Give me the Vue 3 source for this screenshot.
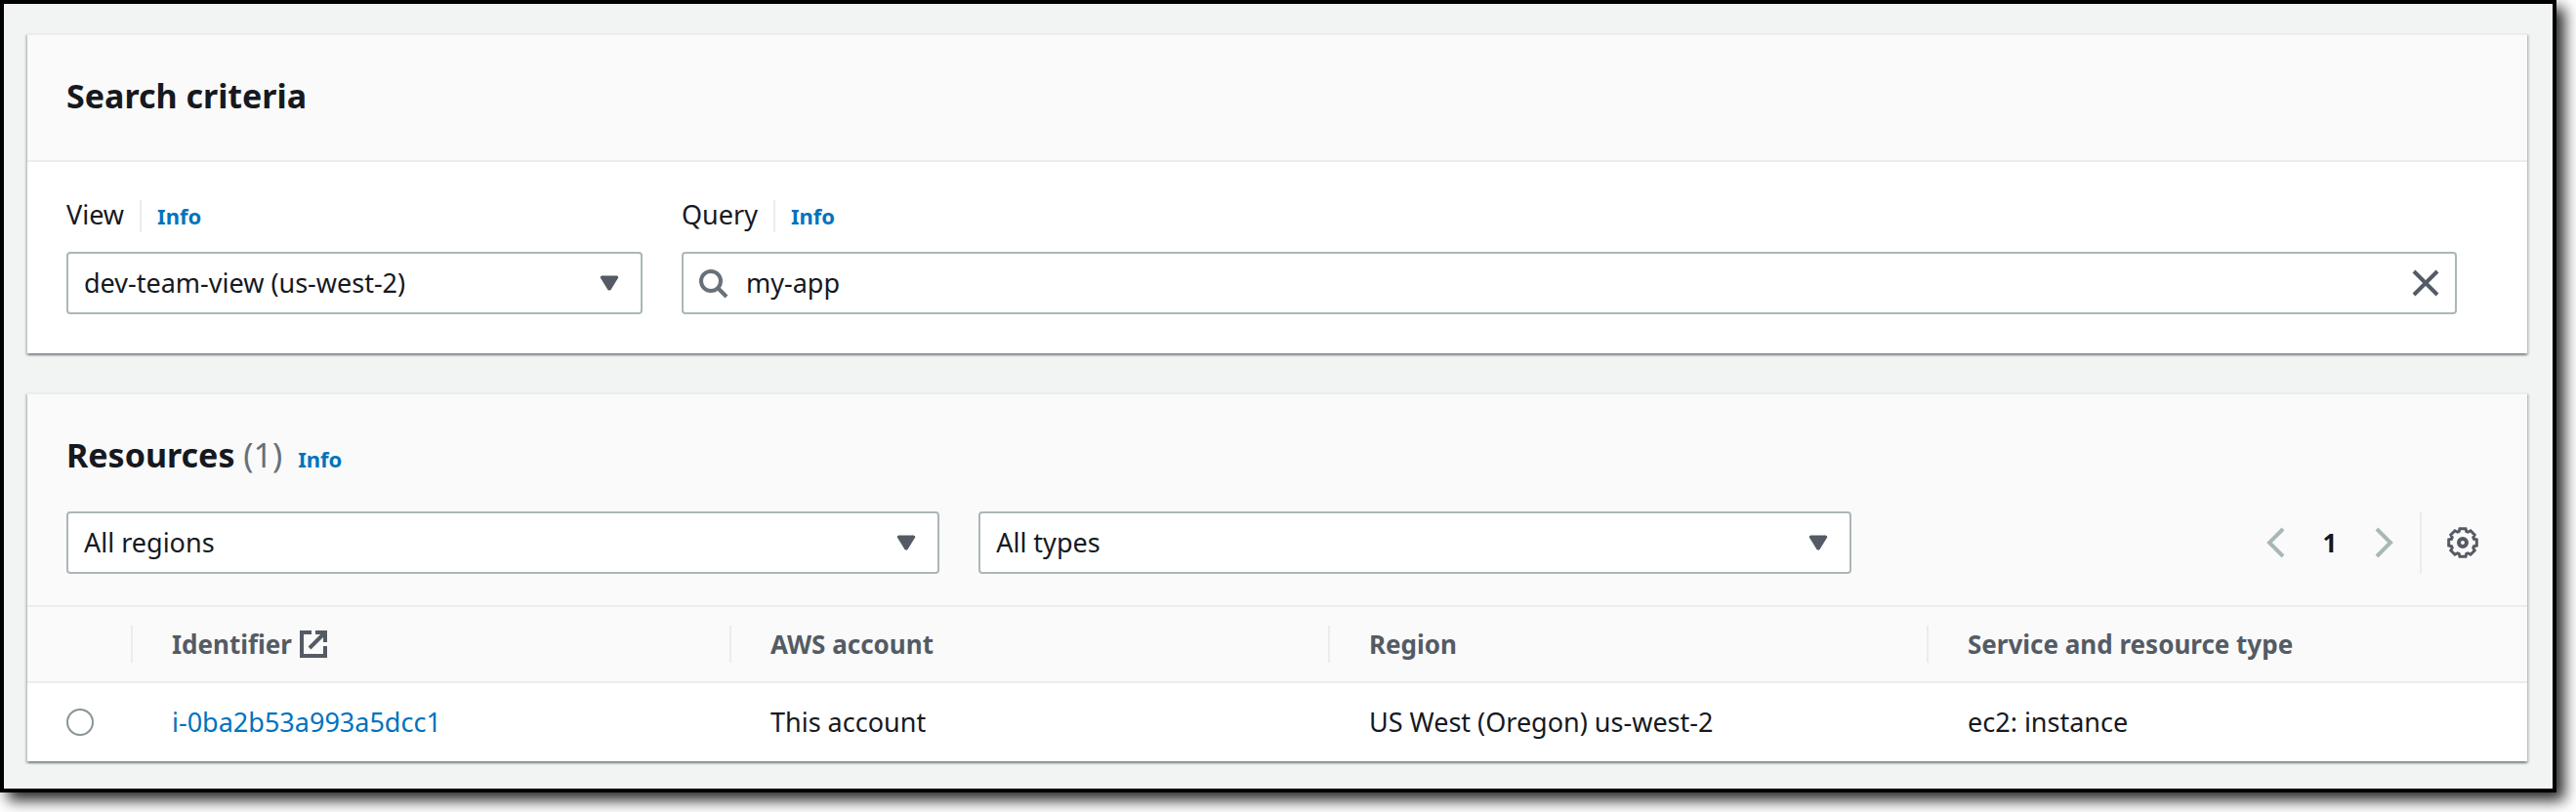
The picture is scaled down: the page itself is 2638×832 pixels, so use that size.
<script setup>
import { ref } from 'vue'

const view = ref('dev-team-view (us-west-2)')
const query = ref('my-app')
const region = ref('All regions')
const type = ref('All types')
const selected = ref(null)

const resources = [
  {
    id: 'i-0ba2b53a993a5dcc1',
    account: 'This account',
    region: 'US West (Oregon) us-west-2',
    type: 'ec2: instance',
  },
]
</script>

<template>
  <main class="window">
    <section class="card">
      <header class="card-header">
        <h2>Search criteria</h2>
      </header>
      <form class="criteria" @submit.prevent>
        <div class="field view-field">
          <div class="label-row">
            <label for="view">View</label>
            <a class="info divided" href="#view-info">Info</a>
          </div>
          <div class="select">
            <select id="view" v-model="view">
              <option>dev-team-view (us-west-2)</option>
            </select>
            <svg class="arrow" viewBox="0 0 20 16" aria-hidden="true">
              <path d="M2 1h16l1 1-8 13h-2L1 2z" />
            </svg>
          </div>
        </div>
        <div class="field query-field">
          <div class="label-row">
            <label for="query">Query</label>
            <a class="info divided" href="#query-info">Info</a>
          </div>
          <div class="search">
            <svg class="search-icon" viewBox="0 0 32 32" aria-hidden="true">
              <circle cx="14" cy="14" r="10" />
              <path d="M21 21l9 9" />
            </svg>
            <input id="query" v-model="query" type="text" />
            <button type="button" aria-label="Clear query" @click="query = ''">
              <svg class="icon" viewBox="0 0 32 32" aria-hidden="true">
                <path d="M4 4l24 24M28 4L4 28" />
              </svg>
            </button>
          </div>
        </div>
      </form>
    </section>

    <section class="card">
      <header class="card-header resources-header">
        <div class="title-row">
          <h2>Resources <span class="counter">(1)</span></h2>
          <a class="info" href="#resources-info">Info</a>
        </div>
        <div class="tools">
          <div class="filters">
            <div class="select">
              <select v-model="region" aria-label="Region filter">
                <option>All regions</option>
              </select>
              <svg class="arrow" viewBox="0 0 20 16" aria-hidden="true">
                <path d="M2 1h16l1 1-8 13h-2L1 2z" />
              </svg>
            </div>
            <div class="select">
              <select v-model="type" aria-label="Type filter">
                <option>All types</option>
              </select>
              <svg class="arrow" viewBox="0 0 20 16" aria-hidden="true">
                <path d="M2 1h16l1 1-8 13h-2L1 2z" />
              </svg>
            </div>
          </div>
          <nav class="pagination" aria-label="Pages">
            <button type="button" class="page-arrow" aria-label="Previous page">
              <svg class="icon" viewBox="0 0 32 32" aria-hidden="true">
                <path d="M24 2L10 16l14 14" />
              </svg>
            </button>
            <button type="button" class="page" aria-current="page">1</button>
            <button type="button" class="page-arrow" aria-label="Next page">
              <svg class="icon" viewBox="0 0 32 32" aria-hidden="true">
                <path d="M8 2l14 14L8 30" />
              </svg>
            </button>
          </nav>
          <div class="preferences">
            <button type="button" aria-label="Preferences">
              <svg class="icon" viewBox="-16 -16 32 32" aria-hidden="true">
                <path class="gear-rim" d="M-3-14.3L3-14.3L3.8-11.4L5.4-10.8L8-12.2L12.2-8L10.8-5.4L11.4-3.8L14.3-3L14.3 3L11.4 3.8L10.8 5.4L12.2 8L8 12.2L5.4 10.8L3.8 11.4L3 14.3L-3 14.3L-3.8 11.4L-5.4 10.8L-8 12.2L-12.2 8L-10.8 5.4L-11.4 3.8L-14.3 3L-14.3-3L-11.4-3.8L-10.8-5.4L-12.2-8L-8-12.2L-5.4-10.8L-3.8-11.4Z" />
                <circle r="4" />
              </svg>
            </button>
          </div>
        </div>
      </header>
      <table>
        <thead>
          <tr>
            <th class="pick" scope="col" aria-label="Selection"></th>
            <th scope="col">
              <span class="th-label">
                Identifier
                <svg class="external" viewBox="0 0 28 28" aria-hidden="true">
                  <path d="M12 2H2v24h24V16M16 2h10v10M26 2L10 18" />
                </svg>
              </span>
            </th>
            <th scope="col">AWS account</th>
            <th scope="col">Region</th>
            <th scope="col">Service and resource type</th>
          </tr>
        </thead>
        <tbody>
          <tr v-for="item in resources" :key="item.id">
            <td class="pick">
              <input v-model="selected" type="radio" name="resource" :value="item.id" :aria-label="item.id" />
            </td>
            <td><a :href="'#' + item.id">{{ item.id }}</a></td>
            <td>{{ item.account }}</td>
            <td>{{ item.region }}</td>
            <td>{{ item.type }}</td>
          </tr>
        </tbody>
      </table>
    </section>
  </main>
</template>

<style>
body {
  background: #fff;
}
</style>

<style scoped>
* {
  box-sizing: border-box;
}

.window {
  display: flex;
  flex-direction: column;
  gap: 40px;
  margin: 0 20px 20px 0;
  padding: 30px 26px 28px 24px;
  border: 4px solid #000;
  background: #f2f3f3;
  box-shadow: 8px 8px 14px rgba(0, 0, 0, 0.85);
  color: #16191f;
  font-family: "Noto Sans", "Open Sans", sans-serif;
  font-size: 27px;
  line-height: 36px;
}

.card {
  border-top: 2px solid #eaeded;
  background: #fff;
  box-shadow:
    0 2px 2px rgba(0, 28, 36, 0.3),
    2px 2px 2px rgba(0, 28, 36, 0.15),
    -2px 2px 2px rgba(0, 28, 36, 0.15);
}

.card-header {
  padding: 38px 40px 42px;
  border-bottom: 2px solid #eaeded;
  background: #fafafa;
}

h2 {
  margin: 0;
  font-size: 34px;
  line-height: 48px;
  font-weight: 700;
}

.counter {
  color: #687078;
  font-weight: 400;
}

a {
  color: #0073bb;
  text-decoration: none;
}

.info {
  font-size: 22px;
  line-height: 33px;
  font-weight: 700;
}

.divided {
  padding-left: 16px;
  border-left: 2px solid #eaeded;
}

.criteria {
  display: grid;
  grid-template-columns: repeat(4, 1fr);
  gap: 40px;
  padding: 36px 40px 40px;
}

.query-field {
  grid-column: span 3;
  padding-right: 32px;
}

.label-row {
  display: flex;
  align-items: baseline;
  gap: 16px;
  margin-bottom: 20px;
}

.select {
  display: grid;
  align-items: center;
}

.select > * {
  grid-area: 1 / 1;
}

select {
  appearance: none;
  width: 100%;
  height: 64px;
  padding: 0 56px 0 16px;
  border: 2px solid #aab7b8;
  border-radius: 4px;
  background: #fff;
  color: inherit;
  font: inherit;
}

.arrow {
  justify-self: end;
  width: 20px;
  height: 16px;
  margin-right: 24px;
  fill: #545b64;
  stroke: #545b64;
  stroke-width: 1;
  stroke-linejoin: round;
  pointer-events: none;
}

.search {
  display: flex;
  align-items: center;
  height: 64px;
  padding: 0 14px;
  border: 2px solid #aab7b8;
  border-radius: 4px;
  background: #fff;
}

.search input {
  flex: 1;
  min-width: 0;
  padding: 0 0 0 18px;
  border: 0;
  outline: 0;
  background: none;
  color: inherit;
  font: inherit;
}

button {
  display: flex;
  align-items: center;
  justify-content: center;
  padding: 0;
  border: 0;
  background: none;
  color: inherit;
  font: inherit;
  cursor: pointer;
}

.icon,
.search-icon {
  width: 32px;
  height: 32px;
  fill: none;
  stroke: #545b64;
  stroke-width: 4;
}

.search-icon {
  stroke: #687078;
}

.gear-rim {
  stroke-width: 3;
}

.resources-header {
  padding: 38px 40px 32px;
}

.title-row {
  display: flex;
  align-items: baseline;
  gap: 16px;
  margin-bottom: 34px;
}

.tools {
  display: flex;
}

.filters {
  display: grid;
  flex: 1;
  grid-template-columns: repeat(12, 1fr);
  margin-right: 40px;
  column-gap: 40px;
}

.filters .select {
  grid-column: span 5;
}

.pagination {
  display: flex;
  align-items: center;
  margin-right: 16px;
}

.page-arrow {
  width: 40px;
  height: 40px;
}

.page-arrow .icon {
  stroke: #aab7b8;
}

.page {
  width: 72px;
  font-size: 26px;
  font-weight: 700;
}

.preferences {
  display: flex;
  align-items: center;
  padding: 0 10px 0 26px;
  border-left: 2px solid #eaeded;
}

table {
  width: 100%;
  border-collapse: separate;
  border-spacing: 0;
  table-layout: fixed;
}

th,
td {
  padding: 0 40px;
  text-align: left;
}

th {
  position: relative;
  height: 78px;
  border-bottom: 2px solid #eaeded;
  background: #fafafa;
  color: #545b64;
  font-size: 26px;
  font-weight: 700;
}

th:not(:last-child)::after {
  content: "";
  position: absolute;
  top: 19px;
  right: 0;
  width: 2px;
  height: 38px;
  background: #eaeded;
}

td {
  height: 80px;
}

.pick {
  width: 108px;
}

.th-label {
  display: flex;
  align-items: center;
  gap: 8px;
}

.external {
  width: 28px;
  height: 28px;
  fill: none;
  stroke: #545b64;
  stroke-width: 4;
}

input[type="radio"] {
  appearance: none;
  display: block;
  width: 28px;
  height: 28px;
  margin: 0;
  border: 2px solid #879596;
  border-radius: 50%;
  background: #fff;
}

input[type="radio"]:checked {
  border: 8px solid #0073bb;
}
</style>
